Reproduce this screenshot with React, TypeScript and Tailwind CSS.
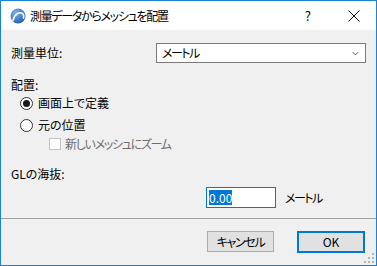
import { ChevronDown } from 'lucide-react';

const FONT = { fontFamily: '"Noto Sans CJK JP", "Noto Sans", sans-serif' };

function AppIcon() {
  return (
    <svg width="16" height="16" viewBox="0 0 16 16">
      <defs>
        <radialGradient id="g" cx="35%" cy="30%" r="75%">
          <stop offset="0%" stopColor="#7fb3ee" />
          <stop offset="100%" stopColor="#1f5fb8" />
        </radialGradient>
      </defs>
      <circle cx="8" cy="8" r="7.5" fill="url(#g)" />
      <path d="M3 12.5 C4.5 6 9 3.5 12.5 5.5 C13.8 6.5 14 8 13.5 10" fill="none" stroke="#fff" strokeWidth="1.6" strokeLinecap="round" />
    </svg>
  );
}

function Radio({ checked, label }: { checked?: boolean; label: string }) {
  return (
    <div className="flex h-4 items-center pl-[19px]">
      <span className="flex h-[13px] w-[13px] items-center justify-center rounded-full border border-[#333] bg-white">
        {checked && <span className="h-[7px] w-[7px] rounded-full bg-[#1a1a1a]" />}
      </span>
      <span className="ml-[5px] text-[12px] leading-4 text-black">{label}</span>
    </div>
  );
}

function Grip() {
  const dots = [
    [8, 0], [4, 4], [8, 4], [0, 8], [4, 8], [8, 8],
  ];
  return (
    <svg width="10" height="10" viewBox="0 0 10 10" className="absolute bottom-[2px] right-[2px]">
      {dots.map(([x, y]) => (
        <rect key={`${x}-${y}`} x={x} y={y} width="2" height="2" fill="#b4b4b4" />
      ))}
    </svg>
  );
}

export default function App() {
  return (
    <div style={FONT} className="relative flex h-[266px] w-[377px] flex-col overflow-hidden border border-[#1883d7] bg-[#f0f0f0] [font-feature-settings:'palt']">
      {/* title bar */}
      <div className="flex h-[29px] shrink-0 items-center bg-white">
        <div className="ml-[9px]"><AppIcon /></div>
        <span className="ml-[4px] text-[12px] tracking-[-1.3px] text-black">測量データからメッシュを配置</span>
        <span className="ml-auto text-[13px] text-black">?</span>
        <svg width="12" height="12" viewBox="0 0 12 12" className="ml-[37px] mr-[16px]">
          <path d="M0.5 0.5 L11.5 11.5 M11.5 0.5 L0.5 11.5" stroke="#111" strokeWidth="1" />
        </svg>
      </div>

      <div className="flex flex-1 flex-col">
        <div className="mt-[13px] flex h-[20px] items-center">
          <span className="w-[155px] pl-[10px] text-[12px] text-black">測量単位:</span>
          <div className="flex h-[20px] w-[210px] items-center border border-[#7a7a7a] bg-white pl-[5px] pr-[4px]">
            <span className="text-[12px] tracking-[-1.5px] text-black">メートル</span>
            <ChevronDown size={11} strokeWidth={1.6} className="ml-auto text-[#333]" />
          </div>
        </div>

        <div className="mt-[14px] pl-[10px] text-[12px] leading-4 text-black">配置:</div>
        <div className="mt-[2px]"><Radio checked label="画面上で定義" /></div>
        <div className="mt-[6px]"><Radio label="元の位置" /></div>
        <div className="mt-[3px] flex h-4 items-center pl-[48px]">
          <span className="h-[12px] w-[12px] border border-[#c4c4c4] bg-white" />
          <span className="ml-[4px] text-[12px] leading-4 tracking-[-1.3px] text-[#6d6d6d]">新しいメッシュにズーム</span>
        </div>

        <div className="mt-[14px] pl-[10px] text-[12px] leading-4 text-black">GLの海抜:</div>
        <div className="mt-[5px] flex h-[21px] items-center">
          <div className="ml-[205px] flex h-[21px] w-[70px] items-center border border-[#0078d7] bg-white pl-[2px]">
            <span className="bg-[#0078d7] text-[12px] leading-[15px] text-white">0.00</span>
          </div>
          <span className="ml-[9px] text-[12px] tracking-[-1.5px] text-black">メートル</span>
        </div>

        <div className="mt-[10px] h-px bg-[#a0a0a0]" />

        <div className="mt-[12px] flex">
          <button className="ml-[206px] flex h-[21px] w-[67px] items-center justify-center border border-[#adadad] bg-[#e1e1e1] text-[12px] tracking-[-1.3px] text-black">
            キャンセル
          </button>
          <button className="ml-[23px] flex h-[22px] w-[68px] items-center justify-center border-2 border-[#0078d7] bg-[#e1e1e1] text-[12px] text-black">
            OK
          </button>
        </div>
      </div>
      <Grip />
    </div>
  );
}
